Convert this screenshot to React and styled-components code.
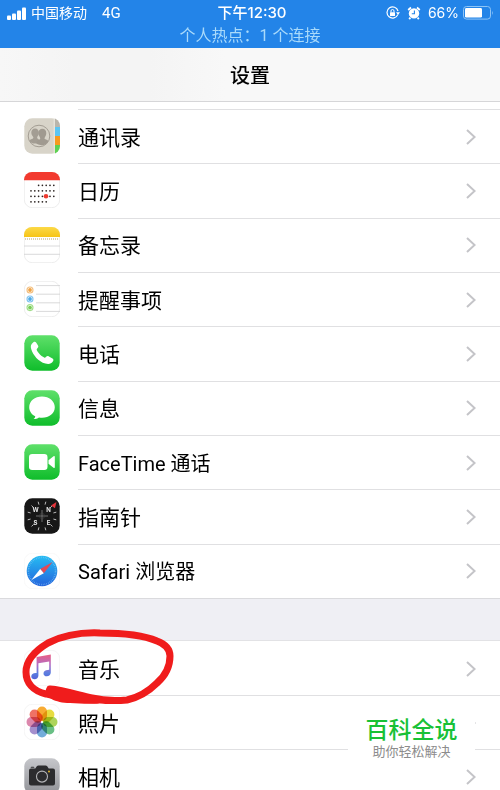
import styled, { createGlobalStyle } from "styled-components";

const GlobalStyle = createGlobalStyle`
  * {
    box-sizing: border-box;
  }
  body {
    margin: 0;
    background-color: #ffffff;
    color: #000000;
    font-family: Roboto, "Noto Sans CJK SC", sans-serif;
  }
`;

const Screen = styled.div`
  width: 100%;
  height: 100vh;
  display: flex;
  flex-direction: column;
  overflow: hidden;
  position: relative;
`;

const StatusBar = styled.header`
  flex-shrink: 0;
  padding: 2px 6px 0;
  background-color: #2384e8;
  color: #ffffff;
`;

const StatusRow = styled.div`
  display: grid;
  grid-template-columns: 1fr auto 1fr;
  align-items: center;
  height: 22px;
  font-size: 14px;
  line-height: 22px;
`;

const StatusSide = styled.div`
  display: flex;
  align-items: center;
  justify-content: ${(props) => (props.$end ? "flex-end" : "flex-start")};
  gap: ${(props) => (props.$end ? "7px" : "5px")};
  white-space: nowrap;
`;

const Network = styled.span`
  margin-left: 10px;
  font-size: 15px;
`;

const Percent = styled.span`
  font-family: Inter, sans-serif;
  font-size: 14px;
  margin-right: -3px;
`;

const Clock = styled.time`
  padding-left: 4px;
  font-family: Inter, "Noto Sans CJK SC", sans-serif;
  font-size: 15px;
  font-weight: 500;
`;

const Hotspot = styled.p`
  margin: 0;
  height: 24px;
  color: #a9dafb;
  font-size: 16px;
  line-height: 24px;
  text-align: center;
`;

const NavBar = styled.div`
  flex-shrink: 0;
  height: 54px;
  padding-top: 2px;
  display: flex;
  align-items: center;
  justify-content: center;
  background: linear-gradient(90deg, #f7f7f7, #f4f4f4 15%, #f4f4f4 30%, #f8f8f8 45%);
  border-bottom: 1px solid #d6d6d8;
`;

const Title = styled.h1`
  margin: 0;
  font-size: 20px;
  line-height: 28px;
  font-weight: 500;
`;

const Content = styled.main`
  flex: 1;
  min-height: 0;
  padding-top: 7px;
`;

const List = styled.ul`
  margin: 0;
  padding: 0;
  list-style: none;
  display: grid;
  grid-auto-rows: ${(props) => (props.$even ? "1fr" : "54px")};
  min-height: ${(props) => (props.$even ? "489px" : "0")};
`;

const Item = styled.li`
  position: relative;
  min-height: 54px;
`;

const RowLink = styled.a`
  height: 100%;
  display: flex;
  padding-left: 24px;
  color: inherit;
  text-decoration: none;
`;

const IconBox = styled.span`
  width: 54px;
  flex-shrink: 0;
  display: flex;
  align-items: center;
`;

const RowBody = styled.span`
  flex: 1;
  display: flex;
  align-items: center;
  justify-content: space-between;
  padding-right: 24px;
  border-top: 1px solid ${(props) => (props.$first ? "transparent" : "#e0e0e2")};
`;

const Label = styled.span`
  padding-top: 2px;
  font-size: ${(props) => (props.$latin ? "20px" : "21px")};
  line-height: 28px;
`;

const GroupGap = styled.div`
  height: 43px;
  background-color: #efeff4;
  border-top: 1px solid #dadadd;
  border-bottom: 1px solid #e2e2e5;
`;

const Mark = styled.svg`
  position: absolute;
  top: -15px;
  left: 20px;
  z-index: 1;
  pointer-events: none;
`;

const Watermark = styled.aside`
  position: absolute;
  right: 25px;
  bottom: 26px;
  width: 127px;
  padding: 5px 0;
  background-color: #ffffff;
  text-align: center;
`;

const WatermarkName = styled.strong`
  display: block;
  color: #18c136;
  font-size: 23px;
  line-height: 28px;
  font-weight: 500;
`;

const WatermarkNote = styled.small`
  display: block;
  color: #8c8c8c;
  font-size: 13px;
  line-height: 14px;
`;

const SignalIcon = () => (
  <svg width="20" height="13" viewBox="0 0 20 13" fill="#fff" aria-hidden="true">
    <rect x="1" y="8.5" width="4" height="4.5" rx="1" />
    <rect x="6" y="6.5" width="4" height="6.5" rx="1" />
    <rect x="11" y="3.5" width="4" height="9.5" rx="1" />
    <rect x="16" y="0.5" width="4" height="12.5" rx="1" />
  </svg>
);

const LockIcon = () => (
  <svg width="14" height="14" viewBox="0 0 14 14" fill="none" aria-hidden="true">
    <path d="M11.8 8.6A5.6 5.6 0 1 1 12 5" stroke="#fff" strokeWidth="1.2" />
    <path d="M10 6.2h4l-2 2.8z" fill="#fff" />
    <rect x="4" y="6.2" width="5" height="3.8" rx="0.5" fill="#fff" />
    <path d="M5 6.5V5a1.5 1.5 0 0 1 3 0v1.5" stroke="#fff" strokeWidth="1" />
  </svg>
);

const AlarmIcon = () => (
  <svg width="14" height="14" viewBox="0 0 14 14" fill="none" aria-hidden="true">
    <circle cx="7" cy="7.4" r="5.2" fill="#fff" />
    <path
      d="M1.2 4 4 1.5M12.8 4 10 1.5M3.4 11.6l-1.2 1.5M10.6 11.6l1.2 1.5"
      stroke="#fff"
      strokeWidth="1.8"
    />
    <path d="M7.4 4.4v3.4H4.8" stroke="#2384e8" strokeWidth="1.1" />
  </svg>
);

const BatteryIcon = () => (
  <svg width="31" height="14" viewBox="0 0 31 14" fill="none" aria-hidden="true">
    <rect x="0.5" y="0.5" width="27" height="12.6" rx="3" stroke="#8fc5f6" />
    <rect x="2" y="2" width="17" height="9.6" rx="1.4" fill="#fff" />
    <path d="M29.2 4.8q1.5 2 0 4.2z" fill="#8fc5f6" />
  </svg>
);

const Chevron = () => (
  <svg width="10" height="18" viewBox="0 0 10 18" fill="none" aria-hidden="true">
    <path d="m1 2 7.6 7L1 16" stroke="#c4c4c8" strokeWidth="2" />
  </svg>
);

const Tile = ({ fill = "#fff", stroke = "none", children }) => (
  <svg width="36" height="36" viewBox="0 0 36 36" fill="none" aria-hidden="true">
    <rect
      x="0.3"
      y="0.3"
      width="35.4"
      height="35.4"
      rx="8"
      fill={fill}
      stroke={stroke}
      strokeWidth="0.6"
    />
    {children}
  </svg>
);

const Hidden = styled.svg`
  position: absolute;
`;

const Gradients = () => (
  <Hidden width="0" height="0" aria-hidden="true">
    <defs>
      <linearGradient id="green" x1="0" y1="0" x2="0" y2="1">
        <stop stopColor="#5fe06a" />
        <stop offset="1" stopColor="#0fbd2b" />
      </linearGradient>
      <linearGradient id="yellow" x1="0" y1="0" x2="0" y2="1">
        <stop stopColor="#fcd947" />
        <stop offset="1" stopColor="#f6c416" />
      </linearGradient>
      <linearGradient id="blue" x1="0" y1="0" x2="0" y2="1">
        <stop stopColor="#25bdf3" />
        <stop offset="1" stopColor="#2463dc" />
      </linearGradient>
      <linearGradient id="grey" x1="0" y1="0" x2="0" y2="1">
        <stop stopColor="#c6c7cb" />
        <stop offset="1" stopColor="#929398" />
      </linearGradient>
      <linearGradient id="note" gradientUnits="userSpaceOnUse" x1="18" y1="5" x2="18" y2="29">
        <stop stopColor="#e85f86" />
        <stop offset="0.4" stopColor="#b36cc4" />
        <stop offset="0.75" stopColor="#5b7fe0" />
        <stop offset="1" stopColor="#5564d8" />
      </linearGradient>
      <clipPath id="tile">
        <rect width="36" height="36" rx="8" />
      </clipPath>
    </defs>
  </Hidden>
);

const ContactsIcon = () => (
  <Tile fill="#d8d4c9">
    <g clipPath="url(#tile)">
      <path d="M31 0h5v9h-5z" fill="#b9b5ab" />
      <path d="M31 9h5v9h-5z" fill="#5bc5f2" />
      <path d="M31 18h5v9h-5z" fill="#f79a1e" />
      <path d="M31 27h5v9h-5z" fill="#5ed152" />
      <path d="M30.2 0v36" stroke="#f2efe7" strokeWidth="0.8" />
    </g>
    <circle cx="15" cy="18" r="10.8" stroke="#a39d93" strokeWidth="1" />
    <path
      d="M5.4 22.4c1.400-1.200 4-1.300 4-2.800 0-1.100-2.100-2.200-2.100-4.800 0-2.500 1.500-4.200 3.800-4.200s3.800 1.700 3.800 4.200c0 2.600-1.800 3.700-1.800 4.800 0 1.400 2 1.700 2.600 3.400-1.600 3.500-8.900 3.500-10.300-.6z"
      fill="#a39d93"
    />
    <path
      d="M12.300 25.500c.6-3.800 4-3.400 4-5.200 0-1.200-1.900-2.400-1.900-5.100 0-2.600 1.600-4.400 4-4.400s3.900 1.800 3.900 4.400c0 2.700-1.800 3.900-1.800 5.100 0 1.400 2.700 1.200 3.900 2.600-2.200 4.800-7.400 5.500-12.100 2.600z"
      fill="#a09a90"
    />
  </Tile>
);

const calendarRows = [
  { y: 13.3, from: 2, to: 6 },
  { y: 18.8, from: 0, to: 6 },
  { y: 24.3, from: 0, to: 6 },
  { y: 29.8, from: 0, to: 4 },
];

const CalendarIcon = () => (
  <Tile stroke="#e1e1e1">
    <path d="M0 8.3h36V8a8 8 0 0 0-8-8H8a8 8 0 0 0-8 8z" fill="#f23a2f" />
    {calendarRows.map((row) =>
      Array.from({ length: row.to - row.from + 1 }, (_, i) => (
        <circle
          key={`${row.y}-${i}`}
          cx={7 + (row.from + i) * 3.8}
          cy={row.y}
          r="0.85"
          fill="#2b2320"
        />
      ))
    )}
    <circle cx="22" cy="24.3" r="2.3" fill="#ee3b30" />
  </Tile>
);

const NotesIcon = () => (
  <Tile stroke="#e1e1e1">
    <path d="M0 10h36V8a8 8 0 0 0-8-8H8a8 8 0 0 0-8 8z" fill="url(#yellow)" />
    <path d="M1 12h34" stroke="#b8a468" strokeWidth="1" strokeDasharray="1 1" />
    <path d="M0 19h36M0 27.3h36" stroke="#d0d0d2" strokeWidth="0.8" />
  </Tile>
);

const RemindersIcon = () => (
  <Tile stroke="#e1e1e1">
    <path d="M12 4.6h24M12 13.2h24M12 21.8h24M12 30.4h24" stroke="#cfcfd1" strokeWidth="0.8" />
    {[
      ["#efa244", 9],
      ["#4caae8", 18],
      ["#79ce58", 26.6],
    ].map(([color, y]) => (
      <g key={color}>
        <circle cx="6" cy={y} r="3" stroke={color} strokeWidth="1.1" opacity="0.7" />
        <circle cx="6" cy={y} r="1.9" fill={color} />
      </g>
    ))}
  </Tile>
);

const PhoneIcon = () => (
  <Tile fill="url(#green)">
    <path
      d="M9.4 7.2c1.2-.9 2.2-.5 2.9.6l1.7 2.8c.6 1.1.3 1.9-.6 2.7-1 .9-.9 1.5-.2 2.6 1.6 2.5 3.7 4.7 6.2 6.2 1.2.8 1.8.7 2.7-.3.8-.9 1.7-1.1 2.8-.4l3.6 2.2c1 .6 1.2 1.7.5 2.7-1.7 2.4-3.9 3.5-7.6 2.3C14.3 26.2 9.2 20.4 7.2 13.9c-.9-3-.3-4.9 2.200-6.7z"
      fill="#fff"
    />
  </Tile>
);

const MessagesIcon = () => (
  <Tile fill="url(#green)">
    <path
      d="M18 6.6c-7.2 0-12.8 4.6-12.8 10.6 0 3.9 2.4 7.2 6 9 .1 1.2-.6 2-1.7 2.9 2.2 0 4.1-.7 5.5-1.7 1 .2 2 .3 3 .3 7.2 0 12.8-4.6 12.8-10.5S25.2 6.6 18 6.6z"
      fill="#fff"
    />
  </Tile>
);

const FaceTimeIcon = () => (
  <Tile fill="url(#green)">
    <rect x="5" y="10" width="18.5" height="16" rx="3.2" fill="#fff" />
    <path d="m24.5 16.3 5-4q1.3-.8 1.3.6v10.2q0 1.4-1.3.6l-5-4z" fill="#fff" />
  </Tile>
);

const CompassText = styled.text`
  font: 700 6px Inter, sans-serif;
  fill: #e8e8e8;
  text-anchor: middle;
`;

const CompassIcon = () => (
  <Tile fill="#171717">
    {Array.from({ length: 12 }, (_, i) => (
      <path
        key={i}
        d="M18 3.2v3"
        stroke="#bdbdbd"
        strokeWidth="0.9"
        transform={`rotate(${i * 30 + 15} 18 18)`}
      />
    ))}
    <path d="M18 12v12M12 18h12" stroke="#777" strokeWidth="0.9" />
    <circle cx="18" cy="18" r="2.6" stroke="#454545" strokeWidth="0.6" />
    <path d="m27 7.6 5.4-3.6-1.4 6.2z" fill="#e5343b" />
    <CompassText x="11.5" y="13.5">W</CompassText>
    <CompassText x="24.5" y="13.5">N</CompassText>
    <CompassText x="11.5" y="27">S</CompassText>
    <CompassText x="24.5" y="27">E</CompassText>
  </Tile>
);

const SafariIcon = () => (
  <Tile stroke="#f5f5f5">
    <circle cx="18" cy="18" r="15.3" fill="url(#blue)" />
    <circle
      cx="18"
      cy="18"
      r="13.6"
      stroke="#7fc4f5"
      strokeWidth="1.6"
      strokeDasharray="0.5 1.3"
    />
    <path d="m28.6 9-8.8 11.3-3.6-4.3z" fill="#e44a55" />
    <path d="m7.4 27 8.8-11 3.6 4.3z" fill="#fff" />
  </Tile>
);

const MusicIcon = () => (
  <Tile stroke="#eeeeee">
    <path
      d="M26.800 4.600v17.800c0 2.300-1.800 3.900-4 3.900-1.900 0-3.300-1.200-3.300-2.900 0-2.200 1.700-3.300 4.300-3.500l1.400-.1V11.500l-10.800 1.800v12.200c0 2.300-1.700 3.700-3.800 3.700-1.900 0-3.300-1.100-3.300-2.800 0-2.100 1.700-3.200 4.300-3.400l1-.1V7z"
      fill="url(#note)"
    />
  </Tile>
);

const petals = [
  "#f8a21c",
  "#e5d92b",
  "#a4d049",
  "#58b878",
  "#63a3d6",
  "#9a83c8",
  "#d87ba4",
  "#ee6254",
];

const Petal = styled.rect`
  mix-blend-mode: multiply;
`;

const PhotosIcon = () => (
  <Tile stroke="#eeeeee">
    {petals.map((color, i) => (
      <Petal
        key={color}
        x="13"
        y="2.5"
        width="10"
        height="14.5"
        rx="5"
        fill={color}
        opacity="0.9"
        transform={`rotate(${i * 45} 18 18)`}
      />
    ))}
  </Tile>
);

const CameraIcon = () => (
  <Tile fill="url(#grey)">
    <path
      d="M5 12.5q0-2 2-2h4.3l1.5-2.2q.6-.9 1.7-.9h7q1.1 0 1.7.9l1.5 2.2H29q2 0 2 2v13q0 2-2 2H7q-2 0-2-2z"
      fill="#2c2c2e"
    />
    <path d="M6.6 9.8q0-1 1-1h1.8q1 0 1 1z" fill="#2c2c2e" />
    <circle cx="18" cy="18.6" r="5.5" stroke="#b5b5b8" strokeWidth="1.1" />
    <circle cx="25" cy="13.5" r="0.9" fill="#f1c22e" />
  </Tile>
);

const CircleMark = () => (
  <Mark width="160" height="84" viewBox="20 626 160 84" fill="none" aria-hidden="true">
    <path
      d="M50 689C64 690 78 695 92 698C104 701 116 701 127 700C140 697 149 691 157 683C165 676 170 667 170 656C170 648 165 644 157 641C143 635 118 633 100 633C77 632 60 637 48 643C33 652 26 661 26 672C26 683 33 691 46 694C60 698 78 700 97 700"
      stroke="#f01c1c"
      strokeWidth="7"
      strokeLinecap="round"
      strokeLinejoin="round"
    />
    <path
      d="M46 689C44 697 55 703 70 703C82 704 97 704 108 703L104 698C85 695 70 687 47 688Z"
      fill="#f01c1c"
    />
  </Mark>
);

const apps = [
  { name: "通讯录", icon: ContactsIcon },
  { name: "日历", icon: CalendarIcon },
  { name: "备忘录", icon: NotesIcon },
  { name: "提醒事项", icon: RemindersIcon },
  { name: "电话", icon: PhoneIcon },
  { name: "信息", icon: MessagesIcon },
  { name: "FaceTime 通话", icon: FaceTimeIcon, latin: true },
  { name: "指南针", icon: CompassIcon },
  { name: "Safari 浏览器", icon: SafariIcon, latin: true },
];

const media = [
  { name: "音乐", icon: MusicIcon, marked: true },
  { name: "照片", icon: PhotosIcon },
  { name: "相机", icon: CameraIcon },
];

const SettingsRow = ({ name, icon: Icon, latin, marked, first }) => (
  <Item>
    <RowLink href="#">
      <IconBox>
        <Icon />
      </IconBox>
      <RowBody $first={first}>
        <Label $latin={latin}>{name}</Label>
        <Chevron />
      </RowBody>
    </RowLink>
    {marked && <CircleMark />}
  </Item>
);

const App = () => {
  return (
    <Screen>
      <GlobalStyle />
      <Gradients />
      <StatusBar>
        <StatusRow>
          <StatusSide>
            <SignalIcon />
            <span>中国移动</span>
            <Network>4G</Network>
          </StatusSide>
          <Clock>下午12:30</Clock>
          <StatusSide $end>
            <LockIcon />
            <AlarmIcon />
            <Percent>66%</Percent>
            <BatteryIcon />
          </StatusSide>
        </StatusRow>
        <Hotspot>个人热点：1 个连接</Hotspot>
      </StatusBar>
      <NavBar>
        <Title>设置</Title>
      </NavBar>
      <Content>
        <List $even>
          {apps.map((app) => (
            <SettingsRow key={app.name} {...app} />
          ))}
        </List>
        <GroupGap />
        <List>
          {media.map((app, i) => (
            <SettingsRow key={app.name} {...app} first={i === 0} />
          ))}
        </List>
      </Content>
      <Watermark>
        <WatermarkName>百科全说</WatermarkName>
        <WatermarkNote>助你轻松解决</WatermarkNote>
      </Watermark>
    </Screen>
  );
};

export default App;
